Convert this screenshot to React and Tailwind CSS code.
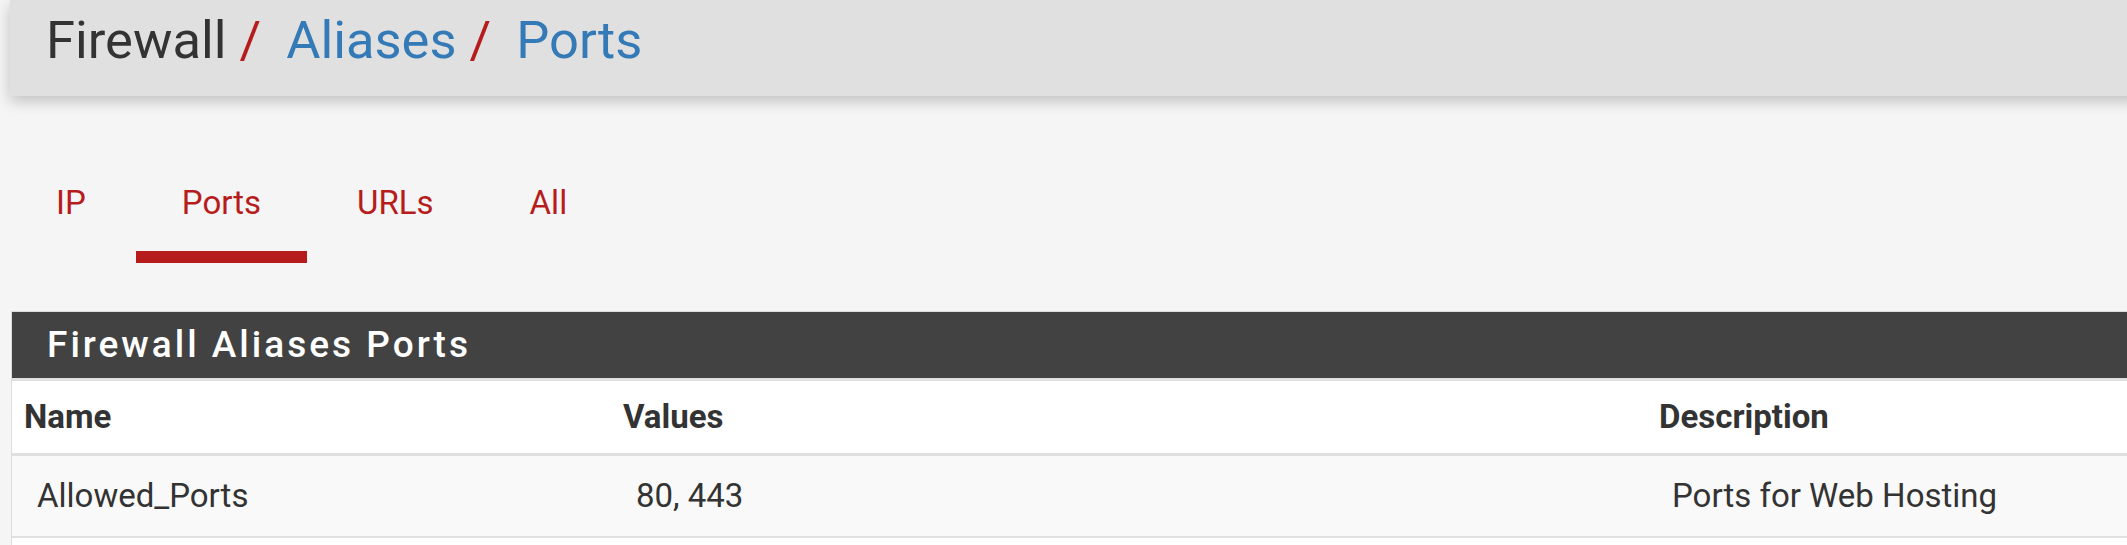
import React from "react";

export default function App() {
  const tabs = [
    { label: "IP", active: false },
    { label: "Ports", active: true },
    { label: "URLs", active: false },
    { label: "All", active: false },
  ];
  return (
    <div className="min-h-[545px] w-full overflow-hidden bg-[#f5f5f5] font-['Roboto',sans-serif]">
      <div className="ml-[10px] mr-[-40px] h-[96px] bg-[#e0e0e0] pl-[36px] pt-[10px] shadow-[0_5px_14px_rgba(0,0,0,0.22)]">
        <div className="flex items-baseline text-[52.5px] leading-[60px]">
          <span className="text-[#333]">Firewall</span>
          <span className="ml-[13px] mr-[25px] text-[#b71c1c]">/</span>
          <span className="text-[#337ab7]">Aliases</span>
          <span className="ml-[13px] mr-[25px] text-[#b71c1c]">/</span>
          <span className="text-[#337ab7]">Ports</span>
        </div>
      </div>

      <nav className="ml-[10px] mt-[87px] flex gap-[4px]">
        {tabs.map((t) => (
          <a
            key={t.label}
            className={
              "block border-b-[12px] px-[46px] pb-[28px] text-[33px] leading-[40px] text-[#b71c1c] " +
              (t.active ? "border-[#b71c1c]" : "border-transparent")
            }
          >
            {t.label}
          </a>
        ))}
      </nav>

      <div className="ml-[11px] mr-[-40px] mt-[48px] border border-[#dddddd] bg-white">
        <div className="h-[66px] bg-[#424242] pl-[35px] text-[37px] font-medium leading-[66px] tracking-[3px] text-white">
          Firewall Aliases Ports
        </div>
        <div className="grid grid-cols-[599px_1036px_1fr] border-t-[3px] border-b-[3px] border-[#e0e0e0] bg-white text-[33px] font-bold leading-[40px] text-[#333]">
          <div className="flex h-[72px] items-center pl-[12px]">Name</div>
          <div className="flex h-[72px] items-center pl-[12px]">Values</div>
          <div className="flex h-[72px] items-center pl-[12px]">Description</div>
        </div>
        <div className="grid grid-cols-[599px_1036px_1fr] border-b-[2px] border-[#e0e0e0] bg-[#f9f9f9] text-[33px] leading-[40px] text-[#333]">
          <div className="flex h-[80px] items-center pl-[25px]">Allowed_Ports</div>
          <div className="flex h-[80px] items-center pl-[25px]">80, 443</div>
          <div className="flex h-[80px] items-center pl-[25px]">Ports for Web Hosting</div>
        </div>
        <div className="h-[60px] bg-white"></div>
      </div>
    </div>
  );
}
